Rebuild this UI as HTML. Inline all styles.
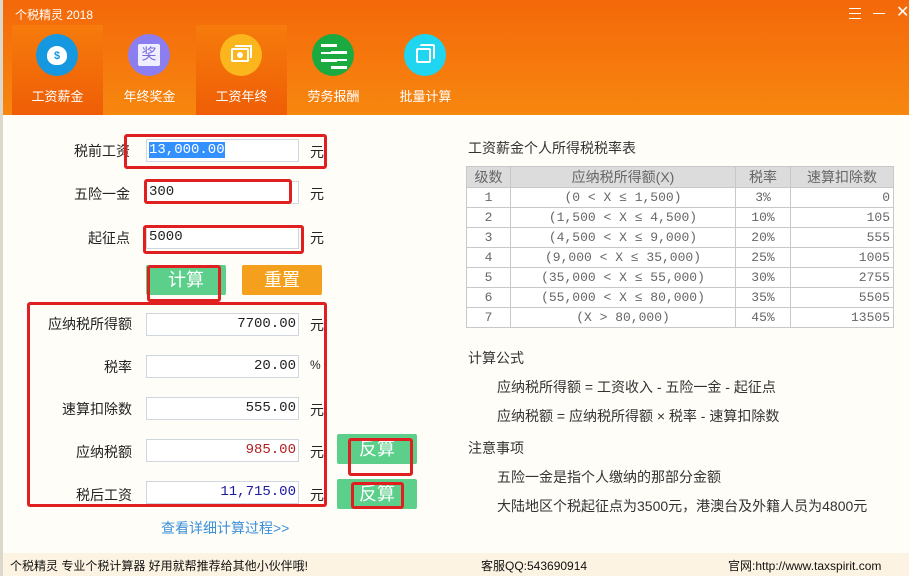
<!DOCTYPE html>
<html><head><meta charset="utf-8"><style>
*{margin:0;padding:0;box-sizing:border-box}
body{width:909px;height:576px;overflow:hidden;background:#fffdf8;font-family:"Liberation Sans","Noto Sans CJK SC",sans-serif;position:relative;font-size:14px;color:#222}
.abs{position:absolute}
#left{left:0;top:0;width:3px;height:576px;background:#dcd8cc}
#hdr{left:3px;top:0;width:906px;height:115px;background:linear-gradient(#f4680a,#f7870f)}
.tab{top:25px;width:91px;height:90px}
.tab.act{background:linear-gradient(#f67b0c,#ef5e06)}
.ic{width:42px;height:42px;border-radius:50%;top:34px}
.tl{top:86px;width:91px;text-align:center;color:#fff;font-size:13px}
.lab{text-align:right;width:110px;font-size:14px}
.inp{background:#fff;border:1px solid #cfd6de;height:23px;width:153px;font-family:"Liberation Mono","Noto Sans CJK SC",monospace;font-size:14px;line-height:21px;padding:0 2px}
.r{text-align:right}
.red{border:3px solid #e02020;border-radius:3px}
.btn{background:#5ccf8b;color:#fff;font-size:18px;text-align:center;border-radius:2px}
table{border-collapse:collapse;font-family:"Liberation Mono","Noto Sans CJK SC",monospace;font-size:13px;color:#666}
td{border:1px solid #c8c8c8;height:20px;padding:0 3px;text-align:center;background:#fff}
tr.h td{background:#dcdcdc;font-family:"Liberation Sans","Noto Sans CJK SC",sans-serif;font-size:14px}
.t{font-size:14px;color:#333}
</style></head><body>
<div id="left" class="abs"></div>
<div id="hdr" class="abs"></div>
<div class="abs" style="left:15px;top:6px;color:#fff;font-size:12px">个税精灵 2018</div>
<div class="abs" style="left:849px;top:8px;width:12px;height:11px;border-top:1px solid #fff;border-bottom:1px solid #fff"></div>
<div class="abs" style="left:849px;top:13px;width:12px;height:1px;background:#fff"></div>
<div class="abs" style="left:873px;top:13px;width:12px;height:1px;background:#fff"></div>
<div class="abs" style="left:896px;top:4px;color:#fff;font-size:16px;line-height:18px">✕</div>
<div class="abs tab act" style="left:12px"></div>
<div class="abs tab act" style="left:196px"></div>
<div class="abs ic" style="left:36px;background:#1598e0"><div class="abs" style="left:11px;top:12px;width:20px;height:19px;background:#fff;border-radius:50% 50% 45% 45%;color:#1598e0;font-size:11px;text-align:center;line-height:20px;font-weight:bold">$</div></div>
<div class="abs ic" style="left:128px;background:#8c7ef0"><div class="abs" style="left:10px;top:10px;width:22px;height:22px;background:#eef;border-radius:2px;color:#7b6be0;font-size:15px;text-align:center;line-height:22px">奖</div></div>
<div class="abs ic" style="left:220px;background:#fbb61e"><div class="abs" style="left:11px;top:14px;width:18px;height:14px;border:2px solid #fff;border-radius:2px"></div><div class="abs" style="left:15px;top:11px;width:17px;height:13px;border-top:2px solid #fff;border-right:2px solid #fff"></div><div class="abs" style="left:17px;top:18px;width:6px;height:6px;background:#fff;border-radius:50%"></div></div>
<div class="abs ic" style="left:312px;background:#1aaa3f"><div class="abs" style="left:9px;top:10px;width:16px;height:18px;border-top:3px solid #fff;border-bottom:3px solid #fff;background:linear-gradient(transparent 40%,#fff 40%,#fff 60%,transparent 60%)"></div><div class="abs" style="left:19px;top:17px;width:16px;height:18px;border-top:3px solid #fff;border-bottom:3px solid #fff;background:linear-gradient(transparent 40%,#fff 40%,#fff 60%,transparent 60%)"></div></div>
<div class="abs ic" style="left:404px;background:#1fd5f0"><div class="abs" style="left:12px;top:14px;width:15px;height:15px;border:2px solid #fff;border-radius:2px"></div><div class="abs" style="left:16px;top:10px;width:15px;height:15px;border-top:2px solid #fff;border-right:2px solid #fff;border-radius:2px"></div></div>
<div class="abs tl" style="left:12px">工资薪金</div>
<div class="abs tl" style="left:104px">年终奖金</div>
<div class="abs tl" style="left:196px">工资年终</div>
<div class="abs tl" style="left:288px">劳务报酬</div>
<div class="abs tl" style="left:380px">批量计算</div>

<div class="abs lab" style="left:20px;top:141px">税前工资</div>
<div class="abs inp" style="left:146px;top:139px"><span style="background:#3390ff;color:#fff">13,000.00</span></div>
<div class="abs" style="left:310px;top:142px">元</div>
<div class="abs lab" style="left:20px;top:184px">五险一金</div>
<div class="abs inp" style="left:146px;top:181px">300</div>
<div class="abs" style="left:310px;top:184px">元</div>
<div class="abs lab" style="left:20px;top:228px">起征点</div>
<div class="abs inp" style="left:146px;top:226px">5000</div>
<div class="abs" style="left:310px;top:228px">元</div>
<div class="abs btn" style="left:146px;top:265px;width:80px;height:30px;line-height:30px">计算</div>
<div class="abs btn" style="left:242px;top:265px;width:80px;height:30px;line-height:30px;background:#f5a01c">重置</div>

<div class="abs lab" style="left:22px;top:314px;width:110px">应纳税所得额</div>
<div class="abs inp r" style="left:146px;top:313px">7700.00</div>
<div class="abs" style="left:310px;top:315px">元</div>
<div class="abs lab" style="left:22px;top:357px">税率</div>
<div class="abs inp r" style="left:146px;top:355px">20.00</div>
<div class="abs" style="left:310px;top:358px;font-size:12px">%</div>
<div class="abs lab" style="left:22px;top:399px">速算扣除数</div>
<div class="abs inp r" style="left:146px;top:397px">555.00</div>
<div class="abs" style="left:310px;top:400px">元</div>
<div class="abs lab" style="left:22px;top:442px">应纳税额</div>
<div class="abs inp r" style="left:146px;top:439px;color:#b02020">985.00</div>
<div class="abs" style="left:310px;top:442px">元</div>
<div class="abs lab" style="left:22px;top:485px">税后工资</div>
<div class="abs inp r" style="left:146px;top:481px;color:#1a1aa0">11,715.00</div>
<div class="abs" style="left:310px;top:485px">元</div>
<div class="abs btn" style="left:337px;top:434px;width:80px;height:30px;line-height:30px">反算</div>
<div class="abs btn" style="left:337px;top:479px;width:80px;height:30px;line-height:30px">反算</div>
<div class="abs" style="left:161px;top:518px;color:#3b8fd8;font-size:14px">查看详细计算过程&gt;&gt;</div>

<div class="abs red" style="left:124px;top:134px;width:203px;height:35px"></div>
<div class="abs red" style="left:144px;top:179px;width:148px;height:25px"></div>
<div class="abs red" style="left:143px;top:225px;width:161px;height:29px"></div>
<div class="abs red" style="left:147px;top:265px;width:74px;height:37px"></div>
<div class="abs red" style="left:27px;top:302px;width:300px;height:205px"></div>
<div class="abs red" style="left:348px;top:438px;width:65px;height:38px"></div>
<div class="abs red" style="left:351px;top:482px;width:53px;height:27px"></div>

<div class="abs t" style="left:468px;top:138px">工资薪金个人所得税税率表</div>
<table class="abs" style="left:466px;top:166px;width:428px">
<tr class="h"><td style="width:44px">级数</td><td style="width:225px">应纳税所得额(X)</td><td style="width:55px">税率</td><td>速算扣除数</td></tr>
<tr><td>1</td><td>(0 &lt; X ≤ 1,500)</td><td>3%</td><td class="r">0</td></tr>
<tr><td>2</td><td>(1,500 &lt; X ≤ 4,500)</td><td>10%</td><td class="r">105</td></tr>
<tr><td>3</td><td>(4,500 &lt; X ≤ 9,000)</td><td>20%</td><td class="r">555</td></tr>
<tr><td>4</td><td>(9,000 &lt; X ≤ 35,000)</td><td>25%</td><td class="r">1005</td></tr>
<tr><td>5</td><td>(35,000 &lt; X ≤ 55,000)</td><td>30%</td><td class="r">2755</td></tr>
<tr><td>6</td><td>(55,000 &lt; X ≤ 80,000)</td><td>35%</td><td class="r">5505</td></tr>
<tr><td>7</td><td>(X &gt; 80,000)</td><td>45%</td><td class="r">13505</td></tr>
</table>
<div class="abs t" style="left:468px;top:348px">计算公式</div>
<div class="abs t" style="left:497px;top:377px">应纳税所得额 = 工资收入 - 五险一金 - 起征点</div>
<div class="abs t" style="left:497px;top:406px">应纳税额 = 应纳税所得额 × 税率 - 速算扣除数</div>
<div class="abs t" style="left:468px;top:438px">注意事项</div>
<div class="abs t" style="left:497px;top:467px">五险一金是指个人缴纳的那部分金额</div>
<div class="abs t" style="left:497px;top:496px">大陆地区个税起征点为3500元，港澳台及外籍人员为4800元</div>

<div class="abs" style="left:3px;top:553px;width:906px;height:23px;background:#fcf3e2"></div>
<div class="abs" style="left:10px;top:557px;font-size:12px;color:#111">个税精灵 专业个税计算器 好用就帮推荐给其他小伙伴哦!</div>
<div class="abs" style="left:481px;top:557px;font-size:12px;color:#111">客服QQ:543690914</div>
<div class="abs" style="left:728px;top:557px;font-size:12px;color:#111">官网:http://www.taxspirit.com</div>
</body></html>
